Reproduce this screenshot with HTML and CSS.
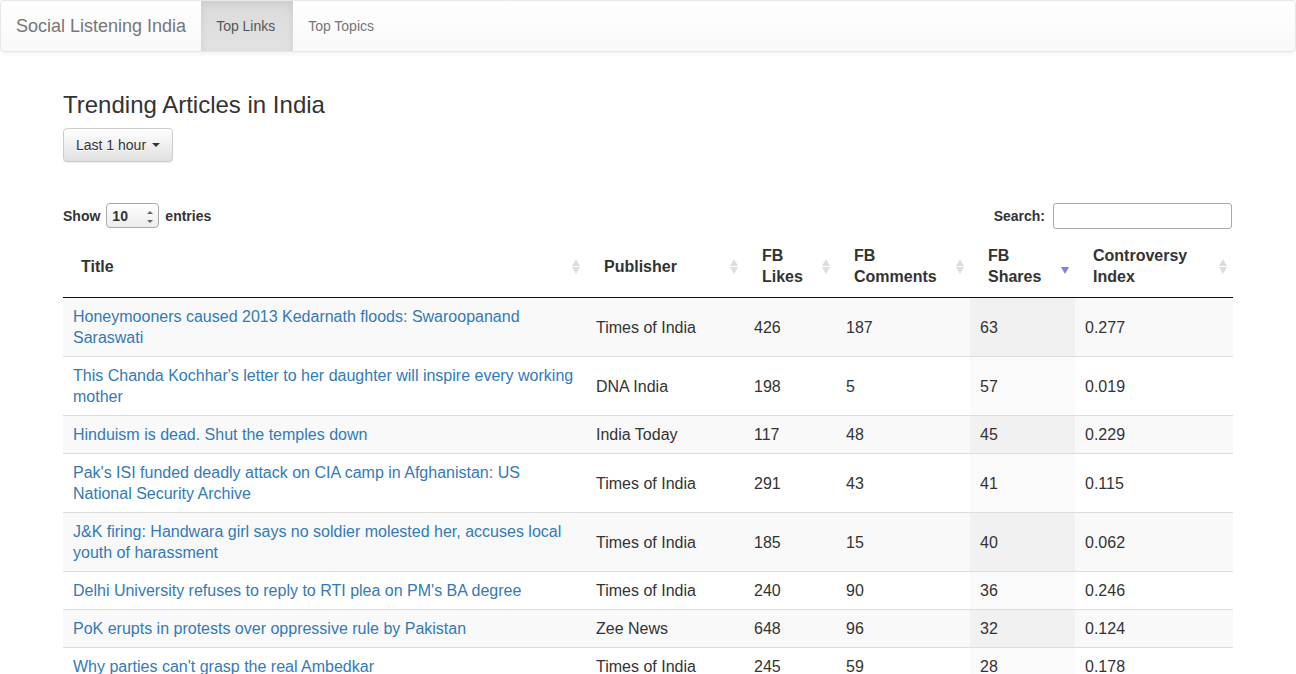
FILE: index.html
```html
<!DOCTYPE html>
<html lang="en">
<head>
<meta charset="utf-8">
<meta name="viewport" content="width=device-width, initial-scale=1">
<title>Social Listening India</title>
<link rel="stylesheet" href="styles.css">
</head>
<body>
<nav class="navbar">
  <a class="brand" href="#">Social Listening India</a>
  <a class="nav-link active" href="#">Top Links</a>
  <a class="nav-link" href="#">Top Topics</a>
</nav>
<main class="container">
  <h1 class="page-title">Trending Articles in India</h1>
  <button class="period" type="button">Last 1 hour <span class="caret"></span></button>
  <div class="controls">
    <label class="control length">Show
      <span class="select-wrap"><select class="select"><option>10</option><option>25</option><option>50</option></select></span>
      entries</label>
    <label class="control filter">Search: <input class="search" type="search"></label>
  </div>
  <table class="articles">
    <colgroup><col class="col-title"><col class="col-publisher"><col class="col-likes"><col class="col-comments"><col class="col-shares"><col class="col-index"></colgroup>
    <thead>
      <tr>
        <th class="sortable">Title</th>
        <th class="sortable">Publisher</th>
        <th class="sortable">FB Likes</th>
        <th class="sortable">FB Comments</th>
        <th class="sortable sorted">FB Shares</th>
        <th class="sortable">Controversy Index</th>
      </tr>
    </thead>
    <tbody>
      <tr><td><a href="#">Honeymooners caused 2013 Kedarnath floods: Swaroopanand Saraswati</a></td><td>Times of India</td><td>426</td><td>187</td><td class="rank">63</td><td>0.277</td></tr>
      <tr><td><a href="#">This Chanda Kochhar's letter to her daughter will inspire every working mother</a></td><td>DNA India</td><td>198</td><td>5</td><td class="rank">57</td><td>0.019</td></tr>
      <tr><td><a href="#">Hinduism is dead. Shut the temples down</a></td><td>India Today</td><td>117</td><td>48</td><td class="rank">45</td><td>0.229</td></tr>
      <tr><td><a href="#">Pak's ISI funded deadly attack on CIA camp in Afghanistan: US National Security Archive</a></td><td>Times of India</td><td>291</td><td>43</td><td class="rank">41</td><td>0.115</td></tr>
      <tr><td><a href="#">J&amp;K firing: Handwara girl says no soldier molested her, accuses local youth of harassment</a></td><td>Times of India</td><td>185</td><td>15</td><td class="rank">40</td><td>0.062</td></tr>
      <tr><td><a href="#">Delhi University refuses to reply to RTI plea on PM's BA degree</a></td><td>Times of India</td><td>240</td><td>90</td><td class="rank">36</td><td>0.246</td></tr>
      <tr><td><a href="#">PoK erupts in protests over oppressive rule by Pakistan</a></td><td>Zee News</td><td>648</td><td>96</td><td class="rank">32</td><td>0.124</td></tr>
      <tr><td><a href="#">Why parties can't grasp the real Ambedkar</a></td><td>Times of India</td><td>245</td><td>59</td><td class="rank">28</td><td>0.178</td></tr>
    </tbody>
  </table>
</main>
</body>
</html>
```
FILE: styles.css
```css
* { box-sizing: border-box; }
body {
  margin: 0;
  background: #fff;
  color: #333;
  font: 14px/20px "Liberation Sans", Arial, sans-serif;
}
a { color: #337ab7; text-decoration: none; }

.navbar {
  display: flex;
  min-height: 52px;
  margin-bottom: 40px;
  border: 1px solid #e7e7e7;
  border-radius: 4px;
  background: linear-gradient(#fff, #f8f8f8);
  box-shadow: inset 0 1px 0 rgba(255, 255, 255, .15), 0 1px 5px rgba(0, 0, 0, .075);
}
.brand, .nav-link { padding: 15px; color: #777; }
.brand { font-size: 18px; }
.nav-link { min-width: 92px; }
.nav-link.active {
  color: #555;
  background: linear-gradient(#dbdbdb, #e2e2e2);
  box-shadow: inset 0 3px 9px rgba(0, 0, 0, .075);
}

.container { max-width: 1170px; margin: 0 auto; }
.page-title { margin: 0 0 10px; font-size: 24px; line-height: 26px; font-weight: 400; }
.period {
  display: flex;
  align-items: center;
  justify-content: space-between;
  gap: 4px;
  min-width: 110px;
  padding: 6px 12px;
  border: 1px solid #ccc;
  border-radius: 4px;
  background: linear-gradient(#fff, #e0e0e0);
  box-shadow: inset 0 1px 0 rgba(255, 255, 255, .15), 0 1px 1px rgba(0, 0, 0, .075);
  color: #333;
  font: inherit;
  text-shadow: 0 1px 0 #fff;
}
.caret {
  border-top: 4px solid #333;
  border-right: 4px solid transparent;
  border-left: 4px solid transparent;
}

.controls {
  display: flex;
  justify-content: space-between;
  align-items: flex-start;
  margin-top: 41px;
  padding-right: 1px;
}
.control { display: flex; align-items: center; font-weight: 700; }
.length { gap: 6px; }
.filter { gap: 8px; }
.select-wrap { position: relative; display: flex; }
.select {
  appearance: none;
  width: 53px;
  height: 25px;
  padding: 0 5px;
  border: 1px solid #aaa;
  border-radius: 4px;
  background: linear-gradient(#fff, #ececec);
  color: #333;
  font: inherit;
}
.select-wrap::before, .select-wrap::after {
  content: "";
  position: absolute;
  right: 6px;
  border: 3px solid transparent;
  pointer-events: none;
}
.select-wrap::before { top: 8px; border-top: 0; border-bottom-color: #666; }
.select-wrap::after { bottom: 5px; border-bottom: 0; border-top-color: #666; }
.search {
  appearance: none;
  width: 179px;
  height: 26px;
  padding: 0 5px;
  border: 1px solid #aaa;
  border-radius: 3px;
  background: #fff;
  font: inherit;
}

.articles {
  width: 100%;
  margin-top: 6px;
  table-layout: fixed;
  border-collapse: separate;
  border-spacing: 0;
  font-size: 16px;
  line-height: 21px;
}
.col-publisher, .col-index { width: 158px; }
.col-likes { width: 92px; }
.col-comments { width: 134px; }
.col-shares { width: 105px; }
.articles th {
  position: relative;
  padding: 10px 18px;
  border-bottom: 1px solid #111;
  text-align: left;
  vertical-align: middle;
}
.sortable::before, .sortable::after {
  content: "";
  position: absolute;
  right: 6px;
  border: 4px solid transparent;
}
.sortable::before { bottom: 50%; border-top: 0; border-bottom: 7px solid #ddd; }
.sortable::after { top: 50%; margin-top: 1px; border-bottom: 0; border-top: 7px solid #ddd; }
.sorted::before { display: none; }
.sorted::after { border-top-color: #8080e0; }

.articles td { padding: 8px 10px; border-top: 1px solid #ddd; vertical-align: middle; }
.articles tr:first-child td { border-top: 0; }
.articles tbody tr:nth-child(odd) { background: #f9f9f9; }
.articles .rank { background: #fafafa; }
.articles tr:nth-child(odd) .rank { background: #f1f1f1; }
```
